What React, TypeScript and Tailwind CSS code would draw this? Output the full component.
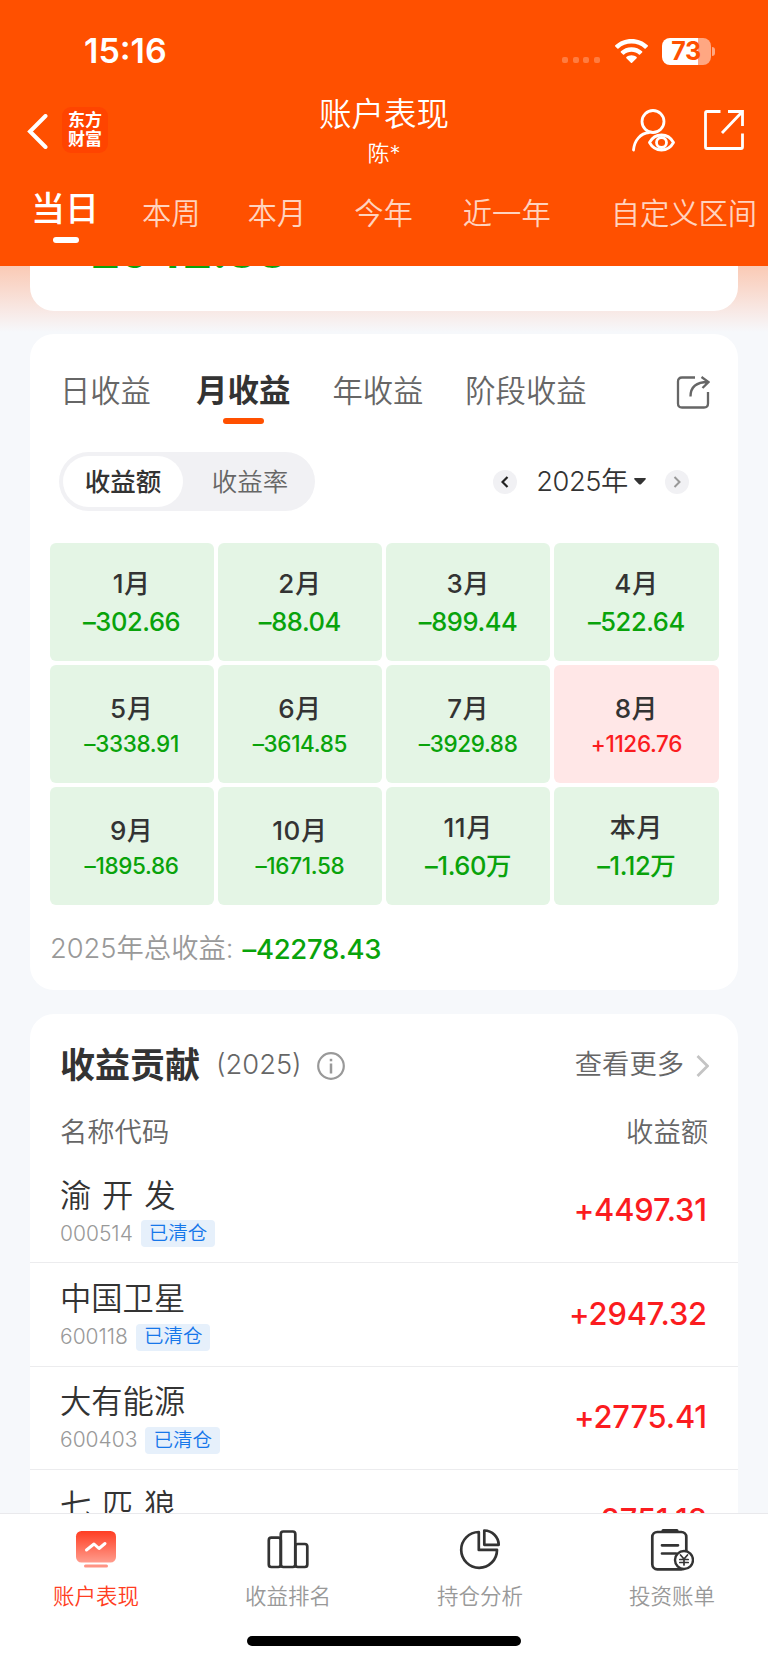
import React, { useState } from "react";

const periods = [
  { name: "本周", className: "ml-[43px]" },
  { name: "本月", className: "ml-[47px]" },
  { name: "今年", className: "ml-[48px]" },
  { name: "近一年", className: "ml-[50px]" },
  { name: "自定义区间", className: "ml-[60px]" },
];

const months = [
  { name: "1月", value: "–302.66" },
  { name: "2月", value: "–88.04" },
  { name: "3月", value: "–899.44" },
  { name: "4月", value: "–522.64" },
  { name: "5月", value: "–3338.91" },
  { name: "6月", value: "–3614.85" },
  { name: "7月", value: "–3929.88" },
  { name: "8月", value: "+1126.76" },
  { name: "9月", value: "–1895.86" },
  { name: "10月", value: "–1671.58" },
  { name: "11月", value: "–1.60万" },
  { name: "本月", value: "–1.12万" },
];

const stocks = [
  { name: "渝 开 发", code: "000514", value: "+4497.31" },
  { name: "中国卫星", code: "600118", value: "+2947.32" },
  { name: "大有能源", code: "600403", value: "+2775.41" },
  { name: "七 匹 狼", code: "002029", value: "+2751.18" },
];

const StatusBar = () => (
  <div className="flex h-[94px] items-center pt-2 pl-[84px] pr-[53px]">
    <span className="text-[34px] leading-none font-semibold">15:16</span>
    <div className="ml-auto mt-[17px] flex gap-[4.5px]">
      {[0, 1, 2, 3].map((i) => (
        <span key={i} className="size-[6px] rounded-[2px] bg-white/25" />
      ))}
    </div>
    <svg className="ml-[15px]" width="33" height="25" viewBox="0 0 33 25" fill="#fff">
      <path d="M16.500 0C22.900 0 28.600 2.400 32.700 6.300C33.100 6.700 33.100 7.200 32.700 7.600L30.700 9.600C30.400 9.900 29.900 9.900 29.500 9.600C26.100 6.400 21.500 4.600 16.500 4.600S6.900 6.400 3.500 9.600C3.100 9.900 2.600 9.900 2.300 9.600L.3 7.600C-.1 7.200-.1 6.700.3 6.300C4.400 2.400 10.100 0 16.500 0Z" />
      <path d="M16.500 8.200C20.700 8.200 24.400 9.800 27.100 12.300C27.500 12.700 27.500 13.200 27.100 13.600L25 15.600C24.700 15.900 24.200 15.900 23.900 15.600C21.900 13.800 19.300 12.800 16.500 12.800S11.100 13.800 9.100 15.600C8.800 15.900 8.300 15.900 8 15.600L5.900 13.600C5.500 13.200 5.500 12.700 5.900 12.300C8.600 9.800 12.300 8.200 16.500 8.200Z" />
      <path d="M16.500 16.200C18.500 16.200 20.300 16.900 21.600 18.100C22 18.500 22 19 21.600 19.300L17.100 23.800C16.800 24.100 16.200 24.100 15.900 23.800L11.400 19.300C11 19 11 18.500 11.400 18.100C12.700 16.900 14.500 16.200 16.500 16.200Z" />
    </svg>
    <div className="ml-[14px] flex h-[27px] w-[49px] items-center justify-center rounded-[8px] bg-[linear-gradient(90deg,#fff_36px,#ffa782_36px)]">
      <span className="text-[25px] leading-none font-bold tracking-[-0.5px] text-[#ff5000]">73</span>
    </div>
    <span className="ml-[1.5px] h-[9px] w-[3px] rounded-r-full bg-[#ffa782]" />
  </div>
);

const Header = () => (
  <header className="h-[266px] shrink-0 bg-[#ff5000] text-white">
    <StatusBar />
    <div className="flex h-[74px] items-center px-[23px]">
      <div className="flex flex-1 items-center">
        <svg className="ml-1" width="21" height="35" viewBox="0 0 21 35" fill="none" stroke="#fff" strokeWidth="4">
          <path d="M18.500 2L3 17.500L18.500 33" strokeLinecap="round" />
        </svg>
        <div className="mb-[2px] ml-[14px] flex size-[46px] flex-col items-center justify-center rounded-[9px] bg-[#ff4400] text-[17px] leading-[19px] font-bold">
          <span>东方</span>
          <span>财富</span>
        </div>
      </div>
      <div className="text-center font-[350]">
        <h1 className="pt-[1px] text-[32.5px] leading-[40px]">账户表现</h1>
        <p className="mt-[3px] text-[22px] leading-[30px]">陈*</p>
      </div>
      <div className="flex flex-1 items-center justify-end gap-[28px] pb-[2px]">
        <svg width="44" height="44" viewBox="0 0 44 44" fill="none" stroke="#fff" strokeWidth="2.800">
          <circle cx="22" cy="13.500" r="11" />
          <path d="M2.500 42C3.500 32 9.500 25.500 18 24.500" strokeLinecap="round" />
          <path d="M18.500 34.500C24 24.500 37 24.500 42.500 34.500C37 44.500 24 44.500 18.500 34.500Z" strokeLinejoin="round" />
          <circle cx="30.500" cy="34.500" r="5" />
        </svg>
        <svg width="42" height="42" viewBox="0 0 42 42" fill="none" stroke="#fff" strokeWidth="2.800">
          <path d="M17.500 2.500H4Q2.500 2.500 2.500 4V38Q2.500 39.500 4 39.500H38Q39.500 39.500 39.500 38V24.500" />
          <path d="M25 2.500H39.500V17M39 3L19 24" />
        </svg>
      </div>
    </div>
    <nav className="flex items-start pl-[31px] whitespace-nowrap">
      <div className="mt-[21px] flex flex-col items-center">
        <span className="text-[34px] leading-[40px] font-medium">当日</span>
        <span className="mt-[8px] ml-[1px] h-[6px] w-[26px] rounded-full bg-white" />
      </div>
      {periods.map((p) => (
        <span key={p.name} className={`${p.className} mt-[26px] text-[29.3px] leading-[40px] font-[350] text-white/75`}>
          {p.name}
        </span>
      ))}
    </nav>
  </header>
);

const MonthCell = ({ name, value }: { name: string; value: string }) => {
  const up = value.startsWith("+");
  // longer amounts are shown one size smaller
  const small = value.length > 7;
  return (
    <div
      className={`flex h-[118px] flex-col items-center rounded-[6px] font-medium ${
        up ? "bg-[#ffe7e7] text-[#fb1c1f]" : "bg-[#e4f5e5] text-[#09a30b]"
      }`}
    >
      <span
        className={`text-[26px] leading-[32px] tracking-[0.5px] text-[#333] ${small ? "mt-[28px]" : "mt-[25.5px]"}`}
      >
        {name}
      </span>
      <span
        className={
          small
            ? "mt-[4.5px] text-[22.5px] leading-[30px] tracking-[-0.35px]"
            : "mt-[6px] text-[25.5px] leading-[32px] tracking-[-0.4px]"
        }
      >
        {value}
      </span>
    </div>
  );
};

const ProfitCard = () => {
  const [mode, setMode] = useState("收益额");

  return (
    <section className="mx-[30px] mt-[23px] h-[656px] shrink-0 rounded-[24px] bg-white pt-[37px]">
      <div className="flex h-[54px] items-start pr-[28px] pl-[30px] text-[30.3px] leading-[40px] text-[#666]">
        <span className="font-[350]">日收益</span>
        <div className="ml-[45px] flex flex-col items-center">
          <span className="text-[31.5px] font-bold text-[#333]">月收益</span>
          <span className="mt-[7px] h-[6px] w-[41px] rounded-[3px] bg-[#ff5000]" />
        </div>
        <span className="ml-[42px] font-[350]">年收益</span>
        <span className="ml-[42px] font-[350]">阶段收益</span>
        <svg className="mt-1 ml-auto" width="34" height="34" viewBox="0 0 34 34" fill="none" stroke="#666" strokeWidth="2.300">
          <path d="M19 2.500H6Q2 2.500 2 6.500V28.500Q2 32.500 6 32.500H28Q32 32.500 32 28.500V17" />
          <path d="M14.500 21.500C14.500 12 20 7 32 7M25.500 2L32.500 7L26.500 13" />
        </svg>
      </div>

      <div className="mt-[27px] flex items-center pr-[49px] pl-[29px]">
        <div className="grid h-[59px] w-[256px] grid-cols-[120px_1fr] rounded-full bg-[#f1f1f4] p-1">
          {["收益额", "收益率"].map((m) => (
            <button
              key={m}
              onClick={() => setMode(m)}
              className={`rounded-full pt-[2px] text-[25.5px] ${
                mode === m ? "bg-white font-medium text-[#333]" : "pl-[6px] font-[350] text-[#666]"
              }`}
            >
              {m}
            </button>
          ))}
        </div>
        <button className="ml-auto flex size-[24px] items-center justify-center rounded-full bg-[#f1f1f4]">
          <svg width="8" height="12" viewBox="0 0 8 12" fill="none" stroke="#222" strokeWidth="2.200">
            <path d="M6.500 1L1.500 6L6.500 11" />
          </svg>
        </button>
        <span className="ml-[19px] text-[27.3px] leading-[32px] font-[350] tracking-[-0.4px] text-[#333]">2025年</span>
        <svg className="ml-[6px]" width="12" height="7" viewBox="0 0 12 7" fill="#333">
          <path d="M1 0H11Q12.500 .5 11.500 1.500L7 6.200Q6 7 5 6.200L.5 1.500Q-.5 .5 1 0Z" />
        </svg>
        <button className="ml-[19px] flex size-[24px] items-center justify-center rounded-full bg-[#f1f1f4]">
          <svg width="8" height="12" viewBox="0 0 8 12" fill="none" stroke="#999" strokeWidth="2">
            <path d="M1.500 1L6.500 6L1.500 11" />
          </svg>
        </button>
      </div>

      <div className="mx-[19.5px] mt-[31.5px] grid grid-cols-4 gap-1">
        {months.map((m) => (
          <MonthCell key={m.name} name={m.name} value={m.value} />
        ))}
      </div>

      <p className="mt-[28px] flex items-center px-[20px] leading-[32px]">
        <span className="text-[27.3px] font-[350] text-[#999]">2025年总收益:</span>
        <span className="ml-[9px] text-[27.5px] font-medium tracking-[-0.3px] text-[#09a30b]">–42278.43</span>
      </p>
    </section>
  );
};

const ContributionCard = () => (
  <section className="mx-[30px] mt-[24px] shrink-0 rounded-t-[24px] bg-white">
    <div className="flex h-[103px] items-center pr-[29px] pl-[30px] text-[27.3px] text-[#666]">
      <h2 className="text-[35px] font-bold text-[#333]">收益贡献</h2>
      <span className="ml-[16px] font-[350]">(2025)</span>
      <svg className="ml-[15px]" width="28" height="28" viewBox="0 0 28 28" fill="none" stroke="#999" strokeWidth="2.200">
        <circle cx="14" cy="14" r="12.800" />
        <path d="M14 11.500V21.500" strokeWidth="2.500" />
        <path d="M14 6.800V9.300" strokeWidth="2.500" />
      </svg>
      <span className="ml-auto font-[350]">查看更多</span>
      <svg className="ml-[12px]" width="13" height="22" viewBox="0 0 13 22" fill="none" stroke="#c4c4c4" strokeWidth="2.800">
        <path d="M1.500 1L11.500 11L1.500 21" />
      </svg>
    </div>
    <div className="flex h-[32px] items-center justify-between px-[30px] text-[27.3px] font-[350] text-[#666]">
      <span>名称代码</span>
      <span>收益额</span>
    </div>
    <ul className="mt-[11px]">
      {stocks.map((s) => (
        <li
          key={s.code}
          className="flex h-[103.4px] items-center justify-between border-b border-[#ececee] pr-[31px] pl-[30px]"
        >
          <div className="pt-[1px]">
            <h3 className="text-[31.3px] leading-[40px] font-[350] [word-spacing:2px] text-[#333]">{s.name}</h3>
            <div className="mt-[4px] flex items-center">
              <span className="text-[21px] leading-[28px] font-[350] text-[#999]">{s.code}</span>
              <span className="ml-[8px] flex h-[27px] items-center rounded-[4px] bg-[#e6f0fb] px-2 text-[19.5px] font-[350] text-[#1677ea]">
                已清仓
              </span>
            </div>
          </div>
          <span className="pb-[2px] text-[30.8px] leading-[36px] font-medium tracking-[-0.1px] text-[#fb1c1f]">
            {s.value}
          </span>
        </li>
      ))}
    </ul>
  </section>
);

const TrendIcon = () => (
  <svg width="44" height="44" viewBox="0 0 44 44" fill="none">
    <defs>
      <linearGradient id="trend" x1="0" y1="0" x2="0" y2="1">
        <stop stopColor="#ff3d22" />
        <stop offset="1" stopColor="#ff9c8d" />
      </linearGradient>
    </defs>
    <rect x="2" y="3" width="40" height="31.500" rx="5.500" fill="url(#trend)" />
    <rect x="10" y="36.500" width="24" height="3" rx="1.500" fill="#ff9484" />
    <path d="M12.500 22L20 16L25 20.500L31 15.500" stroke="#fff" strokeWidth="3" strokeLinecap="round" strokeLinejoin="round" />
  </svg>
);

const RankIcon = () => (
  <svg width="44" height="44" viewBox="0 0 44 44" fill="none" stroke="#333" strokeWidth="2.700">
    <rect x="2.800" y="9.700" width="12" height="29.300" rx="2.500" />
    <rect x="14.800" y="3.500" width="14.500" height="35.500" rx="2.500" />
    <rect x="29.300" y="16" width="12" height="23" rx="2.500" />
  </svg>
);

const PieIcon = () => (
  <svg width="44" height="44" viewBox="0 0 44 44" fill="none" stroke="#333" strokeWidth="2.700" strokeLinejoin="round">
    <path d="M20.800 4A17.900 17.900 0 1 0 39 21.900H20.800Z" />
    <path d="M26.300 2.500A14.500 14.500 0 0 1 40.700 16.800H26.300Z" />
  </svg>
);

const BillIcon = () => (
  <svg width="44" height="44" viewBox="0 0 44 44" fill="none" stroke="#333" strokeWidth="2.700" strokeLinecap="round">
    <rect x="2.300" y="4" width="34" height="37.300" rx="5" />
    <path d="M13 2.500H27" strokeWidth="3" />
    <path d="M12 17.300H28M12 25.500H26" />
    <circle cx="34" cy="32" r="9" fill="#fff" strokeWidth="2.400" />
    <path d="M30.500 27L34 31L37.500 27M34 31V37M29.800 31.500H38.200M29.800 34.500H38.200" strokeWidth="1.700" />
  </svg>
);

const TabBar = () => {
  const items = [
    { name: "账户表现", icon: <TrendIcon />, active: true },
    { name: "收益排名", icon: <RankIcon /> },
    { name: "持仓分析", icon: <PieIcon /> },
    { name: "投资账单", icon: <BillIcon /> },
  ];

  return (
    <footer className="h-[150px] shrink-0 border-t border-[#e9e9ec] bg-white">
      <div className="grid h-[122px] grid-cols-4 pt-[14px]">
        {items.map((item) => (
          <div key={item.name} className="flex flex-col items-center">
            {item.icon}
            <span
              className={`mt-[9px] text-[21.5px] leading-[30px] font-[350] ${
                item.active ? "text-[#ff3d22]" : "text-[#999]"
              }`}
            >
              {item.name}
            </span>
          </div>
        ))}
      </div>
      <div className="mx-auto h-[10px] w-[274px] rounded-full bg-black" />
    </footer>
  );
};

const App = () => {
  return (
    <div className="flex h-[1663px] w-[768px] flex-col overflow-hidden bg-[#f6f8fb] font-['Inter','Noto_Sans_CJK_SC',sans-serif]">
      <Header />
      <main className="flex min-h-0 flex-1 flex-col overflow-hidden bg-[linear-gradient(180deg,#facab5_0px,#f8e8e4_44px,#f6f8fb_66px)]">
        <section className="mx-[30px] h-[45px] shrink-0 overflow-hidden rounded-b-[24px] bg-white pl-[37px]">
          <p className="-mt-[38px] text-[47px] leading-[46px] font-bold text-[#09a30b]">–2942.88</p>
        </section>
        <ProfitCard />
        <ContributionCard />
      </main>
      <TabBar />
    </div>
  );
};

export default App;
